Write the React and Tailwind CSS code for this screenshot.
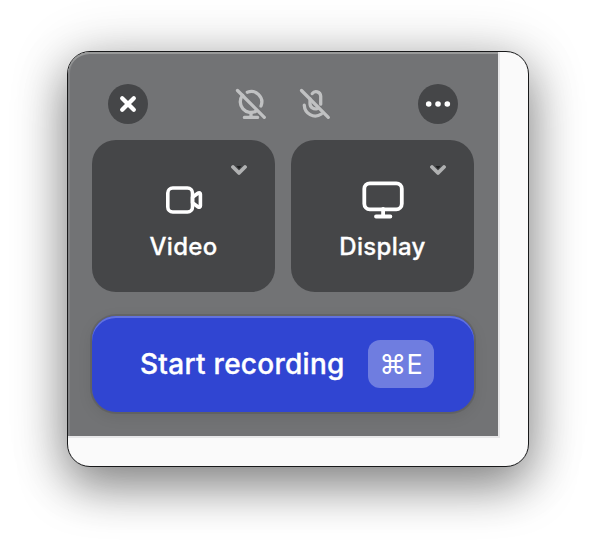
function CameraOffIcon() {
  return (
    <svg width="32" height="32" viewBox="0 0 32 32" fill="none" stroke="#c0c1c2" strokeWidth="3.3" strokeLinecap="round" strokeLinejoin="round">
      <path d="M2.5 2.5 29.3 29.3" />
      <path d="M12.3 4.2A10.6 10.6 0 0 1 26 18" />
      <path d="M7.6 7.2A10.6 10.6 0 0 0 21.5 22.8" />
      <path d="M16 25v4M9.4 29.4h13.2" />
    </svg>
  );
}

function MicOffIcon() {
  return (
    <svg width="32" height="32" viewBox="0 0 32 32" fill="none" stroke="#c0c1c2" strokeWidth="3.3" strokeLinecap="round" strokeLinejoin="round">
      <path d="M2.5 2.5 29.3 29.3" />
      <path d="M13.2 5.6A4.7 4.7 0 0 1 21.7 8v8.2" />
      <path d="M11 10.8v4.4A5.4 5.4 0 0 0 18.5 20.4" />
      <path d="M5.3 17.2C5.6 25.2 14.8 31.4 22.4 26" />
    </svg>
  );
}

function VideoIcon() {
  return (
    <svg width="40" height="40" viewBox="0 0 40 40" fill="none" stroke="white" strokeWidth="3.6" strokeLinecap="round" strokeLinejoin="round">
      <rect x="3.8" y="8" width="24.7" height="24" rx="5" />
      <path d="m28.5 17.3 5.7-4.3c1-.7 2.2 0 2.2 1.2v11.6c0 1.2-1.2 1.9-2.2 1.2l-5.7-4.3z" />
    </svg>
  );
}

function DisplayIcon() {
  return (
    <svg width="44" height="40" viewBox="0 0 44 40" fill="none" stroke="white" strokeWidth="3.8" strokeLinecap="round">
      <rect x="3.3" y="3.3" width="37.5" height="26" rx="5.5" />
      <path d="M22.1 29v7M15 36.5h14.4" />
    </svg>
  );
}

function Chevron() {
  return (
    <svg className="absolute top-6 right-7" width="16" height="12" viewBox="0 0 16 12" fill="none">
      <path d="M5.5 2h5L8 5z" fill="#202122" />
      <path d="m2 3 6 6 6-6" stroke="#b0b1b2" strokeWidth="3.8" strokeLinecap="round" strokeLinejoin="round" />
    </svg>
  );
}

function Card({ icon, label }) {
  return (
    <button className="relative flex h-[152px] w-[183px] flex-col items-center rounded-3xl bg-[#454648] pt-10">
      <Chevron />
      {icon}
      <span className="mt-2.5 text-[24px] leading-[34px] font-medium tracking-[0.3px] [-webkit-text-stroke:0.3px_white]">{label}</span>
    </button>
  );
}

export default function App() {
  return (
    <div className="h-[550px] w-full overflow-hidden bg-white pt-[51px] pl-[67px] font-['Inter','Liberation_Sans',sans-serif] text-white">
      <div className="h-[416px] w-[462px] overflow-hidden rounded-[23px] border border-[#18191a] bg-[#fafafa] shadow-[0_20px_48px_rgba(0,0,0,0.4),0_4px_60px_rgba(0,0,0,0.2)]">
        <div className="h-[386px] w-[432px] border-r-2 border-b-2 border-[#e8e8e9]">
          <main className="h-[384px] w-[430px] rounded-tl-[22px] bg-[#727375] px-6 pt-8 shadow-[inset_0_2px_0_#989999,inset_2px_0_0_#828385]">
            <header className="flex h-10 items-center justify-between px-4">
              <button className="flex size-10 items-center justify-center rounded-full bg-[#454648]">
                <svg width="18" height="18" viewBox="0 0 18 18" stroke="white" strokeWidth="4.3" strokeLinecap="round">
                  <path d="m3.2 3.2 11.6 11.6M14.8 3.2 3.2 14.8" />
                </svg>
              </button>
              <div className="flex gap-8">
                <CameraOffIcon />
                <MicOffIcon />
              </div>
              <button className="flex size-10 items-center justify-center rounded-full bg-[#454648]">
                <svg width="26" height="8" viewBox="0 0 26 8" fill="white">
                  <circle cx="3.7" cy="4" r="2.8" />
                  <circle cx="13" cy="4" r="2.8" />
                  <circle cx="22.3" cy="4" r="2.8" />
                </svg>
              </button>
            </header>
            <div className="mt-4 flex gap-4">
              <Card icon={<VideoIcon />} label="Video" />
              <Card icon={<DisplayIcon />} label="Display" />
            </div>
            <button className="mt-6 flex h-24 w-[382px] items-center justify-between rounded-3xl bg-[#3045d2] pr-10 pl-12 shadow-[inset_0_2px_0_#6272df,0_0_0_2px_rgba(0,0,0,0.1),0_4px_16px_rgba(0,0,0,0.09)]">
              <span className="text-[28px] leading-none font-medium tracking-[0.27px] whitespace-nowrap [-webkit-text-stroke:0.35px_white]">Start recording</span>
              <kbd className="flex h-12 w-[66px] items-center justify-center rounded-xl bg-[#6f7de0] pt-px font-['Inter','DejaVu_Sans',sans-serif] text-[27px] leading-none">⌘E</kbd>
            </button>
          </main>
        </div>
      </div>
    </div>
  );
}
